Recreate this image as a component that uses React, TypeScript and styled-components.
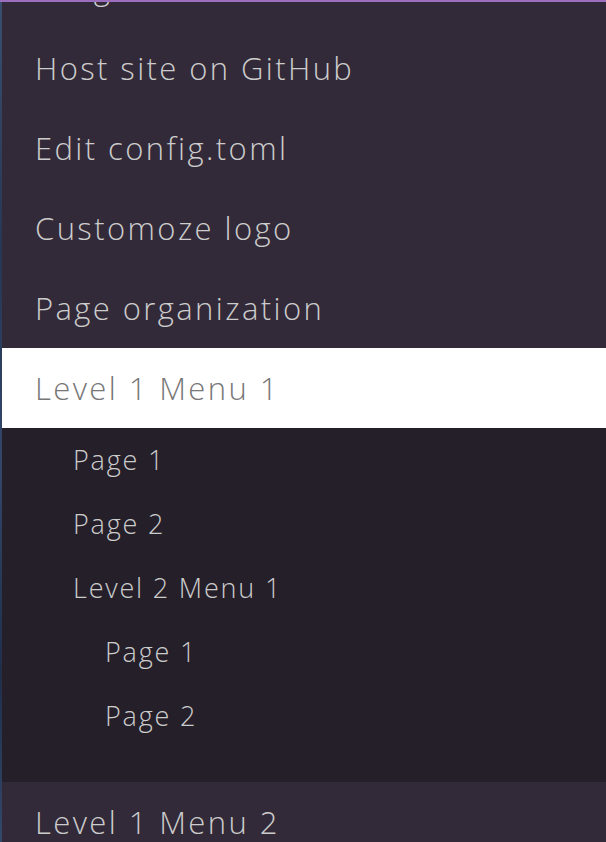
import React, { useLayoutEffect, useRef } from "react";
import styled, { createGlobalStyle } from "styled-components";

const Global = createGlobalStyle`
  html, body { margin: 0; padding: 0; background: #322a38; }
  #root { height: 100vh; }
`;

const Page = styled.div`
  display: flex;
  flex-direction: column;
  height: 100vh;
  font-family: "Open Sans", "Noto Sans", sans-serif;
  font-weight: 300;
`;

const TopBar = styled.div`
  height: 2px;
  flex: none;
  background: #9b6fbd;
`;

const Body = styled.div`
  display: flex;
  flex: 1;
  min-height: 0;
`;

const Edge = styled.div`
  width: 2px;
  flex: none;
  background: linear-gradient(180deg, #3a4e6e 0%, #253754 30%, #33476a 55%, #1f2f4a 80%, #34486a 100%);
`;

const Sidebar = styled.nav`
  flex: 1;
  overflow-y: auto;
  background: #322a38;
  scrollbar-width: none;
  &::-webkit-scrollbar { display: none; }
`;

const Topics = styled.ul`
  list-style: none;
  margin: 0;
  padding: 0;
`;

const Topic = styled.li<{ $open?: boolean }>`
  background: ${(p) => (p.$open ? "#251f2a" : "transparent")};
`;

const TopicLink = styled.a<{ $active?: boolean }>`
  display: block;
  height: 80px;
  line-height: 80px;
  padding-left: 33px;
  font-size: 31px;
  letter-spacing: 2.4px;
  color: ${(p) => (p.$active ? "#777777" : "#cccccc")};
  background: ${(p) => (p.$active ? "#ffffff" : "transparent")};
  text-decoration: none;
  white-space: nowrap;
`;

const SubList = styled.ul<{ $indent: number; $bottom?: number }>`
  list-style: none;
  margin: 0;
  padding: 0 0 ${(p) => p.$bottom ?? 0}px ${(p) => p.$indent}px;
`;

const SubLink = styled.a`
  display: block;
  height: 64px;
  line-height: 64px;
  font-size: 27px;
  letter-spacing: 1.8px;
  color: #cccccc;
  text-decoration: none;
  white-space: nowrap;
`;

export default function App() {
  const ref = useRef<HTMLElement>(null);
  useLayoutEffect(() => {
    if (ref.current) ref.current.scrollTop = 54;
  }, []);
  return (
    <>
      <Global />
      <Page>
        <TopBar />
        <Body>
          <Edge />
          <Sidebar ref={ref}>
            <Topics>
              <Topic><TopicLink>Images</TopicLink></Topic>
              <Topic><TopicLink>Host site on GitHub</TopicLink></Topic>
              <Topic><TopicLink>Edit config.toml</TopicLink></Topic>
              <Topic><TopicLink>Customoze logo</TopicLink></Topic>
              <Topic><TopicLink>Page organization</TopicLink></Topic>
              <Topic $open>
                <TopicLink $active>Level 1 Menu 1</TopicLink>
                <SubList $indent={71} $bottom={34}>
                  <li><SubLink>Page 1</SubLink></li>
                  <li><SubLink>Page 2</SubLink></li>
                  <li>
                    <SubLink>Level 2 Menu 1</SubLink>
                    <SubList $indent={32}>
                      <li><SubLink>Page 1</SubLink></li>
                      <li><SubLink>Page 2</SubLink></li>
                    </SubList>
                  </li>
                </SubList>
              </Topic>
              <Topic><TopicLink>Level 1 Menu 2</TopicLink></Topic>
              <Topic><TopicLink>Level 1 Menu 3</TopicLink></Topic>
              <Topic><TopicLink>Level 1 Menu 4</TopicLink></Topic>
            </Topics>
          </Sidebar>
        </Body>
      </Page>
    </>
  );
}
